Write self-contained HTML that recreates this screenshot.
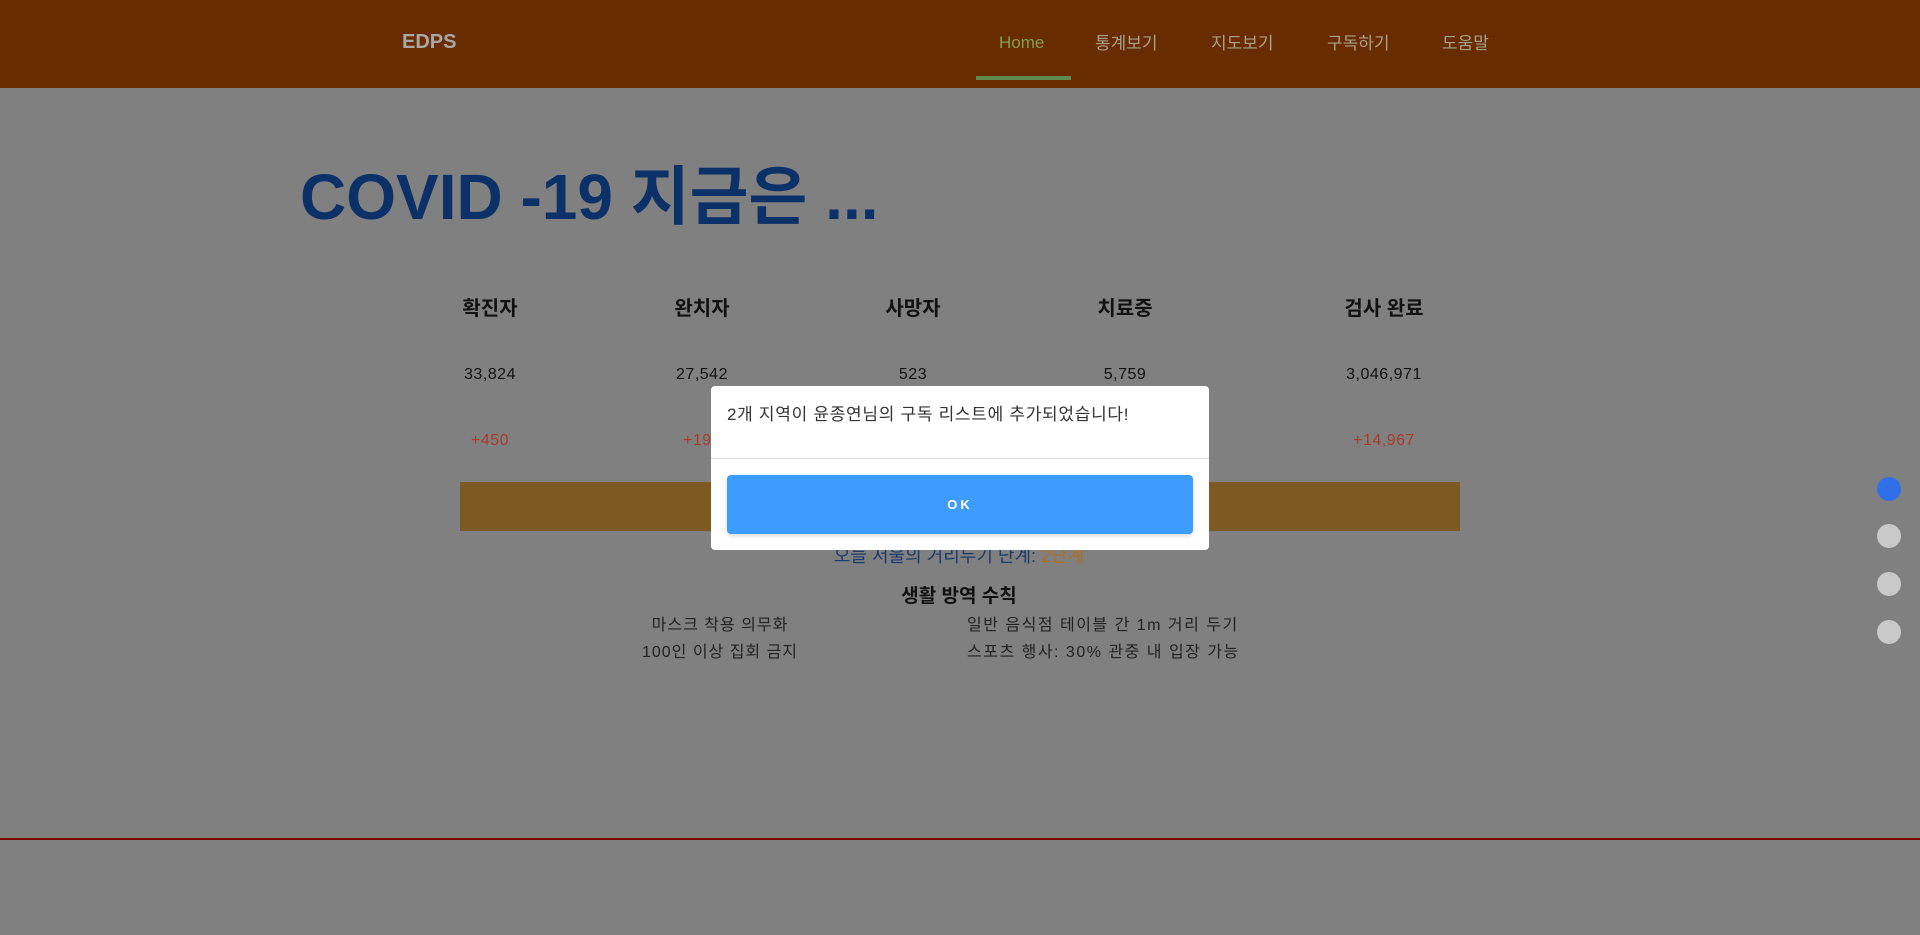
<!DOCTYPE html>
<html><head><meta charset="utf-8"><style>
*{margin:0;padding:0;box-sizing:border-box}
body{width:1920px;height:935px;background:#808080;position:relative;overflow:hidden;font-family:"Liberation Sans","Noto Sans CJK KR",sans-serif;}
.a{position:absolute;white-space:nowrap}
.c{transform:translateX(-50%)}
nav{position:absolute;left:0;top:0;width:1920px;height:88px;background:#692b00}
.ni{position:absolute;top:29px;font-size:17px;color:#a8a090}
.h{font-size:20px;font-weight:bold;color:#111;top:292px}
.n{font-size:16px;color:#111;top:366px;letter-spacing:.5px}
.r{font-size:16px;color:#a83a2a;top:432px;letter-spacing:.5px}
.l{font-size:16px;color:#222;letter-spacing:1px}
.dot{position:absolute;left:1877px;width:24px;height:24px;border-radius:50%;background:#c8c8c8}
</style></head><body>
<nav>
<div class="a" style="left:402px;top:31px;font-size:20px;font-weight:bold;color:#a8a8a8">EDPS</div>
<div class="ni" style="left:999px;top:33px;color:#7fa04f">Home</div>
<div class="ni" style="left:1095px">통계보기</div>
<div class="ni" style="left:1211px">지도보기</div>
<div class="ni" style="left:1327px">구독하기</div>
<div class="ni" style="left:1442px">도움말</div>
<div class="a" style="left:976px;top:76px;width:95px;height:4px;background:#5f8a50"></div>
</nav>
<div class="a" style="left:300px;top:146px;font-size:64px;font-weight:bold;color:#0c3168">COVID -19 지금은 ...</div>
<div class="a c h" style="left:490px">확진자</div>
<div class="a c h" style="left:702px">완치자</div>
<div class="a c h" style="left:913px">사망자</div>
<div class="a c h" style="left:1125px">치료중</div>
<div class="a c h" style="left:1384px">검사 완료</div>
<div class="a c n" style="left:490px">33,824</div>
<div class="a c n" style="left:702px">27,542</div>
<div class="a c n" style="left:913px">523</div>
<div class="a c n" style="left:1125px">5,759</div>
<div class="a c n" style="left:1384px">3,046,971</div>
<div class="a c r" style="left:490px">+450</div>
<div class="a c r" style="left:702px">+195</div>
<div class="a c r" style="left:1384px">+14,967</div>
<div class="a" style="left:460px;top:482px;width:1000px;height:49px;background:#7d5a21"></div>
<div class="a c" style="left:959px;top:542px;font-size:18px;color:#1a3a6a">오늘 서울의 거리두기 단계: <span style="color:#b07020">2단계</span></div>
<div class="a c" style="left:959px;top:581px;font-size:19px;font-weight:bold;color:#111">생활 방역 수칙</div>
<div class="a c l" style="left:720px;top:611px">마스크 착용 의무화</div>
<div class="a c l" style="left:720px;top:638px">100인 이상 집회 금지</div>
<div class="a l" style="left:967px;top:611px;letter-spacing:1.5px">일반 음식점 테이블 간 1m 거리 두기</div>
<div class="a l" style="left:967px;top:638px;letter-spacing:1.5px">스포츠 행사: 30% 관중 내 입장 가능</div>
<div class="a" style="left:0;top:838px;width:1920px;height:2px;background:#7a0000"></div>
<div class="dot" style="top:477px;background:#2f6fe8"></div>
<div class="dot" style="top:524px"></div>
<div class="dot" style="top:572px"></div>
<div class="dot" style="top:620px"></div>
<div class="a" style="left:711px;top:386px;width:498px;height:164px;background:#fff;border-radius:4px">
<div class="a" style="left:16px;top:14px;font-size:17px;color:#333;letter-spacing:.7px">2개 지역이 윤종연님의 구독 리스트에 추가되었습니다!</div>
<div class="a" style="left:0;top:72px;width:498px;height:1px;background:#ddd"></div>
<div class="a" style="left:16px;top:89px;width:466px;height:59px;background:#3d9cff;border-radius:4px;box-shadow:0 2px 4px rgba(0,0,0,.15);color:#fff;font-size:13px;font-weight:bold;letter-spacing:3px;text-align:center;line-height:59px">OK</div>
</div>
</body></html>
